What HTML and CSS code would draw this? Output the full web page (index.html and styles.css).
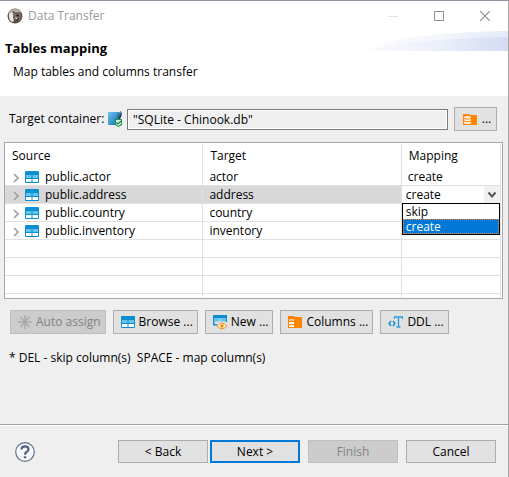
FILE: index.html
```html
<!DOCTYPE html>
<html lang="en">
<head>
<meta charset="utf-8">
<title>Data Transfer</title>
<link rel="stylesheet" href="styles.css">
</head>
<body>
<svg class="defs" width="0" height="0" aria-hidden="true">
  <symbol id="table" viewBox="0 0 14 12">
    <rect width="14" height="12" rx="1" fill="#0a8fd0"/>
    <path d="M1 4h5.500v3H1zM7.500 4H13v3H7.500z" fill="#62c4ef"/>
    <path d="M1 8h5.500v3H1zM7.500 8H13v3H7.500z" fill="#fff"/>
  </symbol>
  <symbol id="chevron" viewBox="0 0 6 10"><path d="M1 1l4 4-4 4" fill="none" stroke="currentColor" stroke-width="1.700"/></symbol>
</svg>
<div class="window">
  <header class="titlebar">
    <svg class="app-icon" viewBox="0 0 16 16" aria-hidden="true">
      <circle cx="8" cy="8" r="7.500" fill="#554b48"/>
      <path d="M1 6Q3 1 8 1q5 0 6.500 4L12 4 9 5 6 3 4 5z" fill="#b8afab"/>
      <path d="M2 6l3-2 2 2-1 3 1 4-2 1Q1 11 2 6z" fill="#e9e4e1"/>
      <path d="M6 6l3-2 4 1 2 3-2 5-4 1-2-3z" fill="#79675f"/>
      <path d="M10 6l2 1-1 2-2-1zM8 11l4-1-1 3H9z" fill="#30282a"/>
      <path d="M8 9l3 1-2 2z" fill="#c9b9b0"/>
    </svg>
    <span class="title">Data Transfer</span>
    <button class="win-btn" aria-label="Minimize" disabled><svg width="10" height="10"><path d="M0 5.500h10" stroke="#e2e2e2"/></svg></button>
    <button class="win-btn" aria-label="Maximize"><svg width="10" height="10"><path d="M.5.5h9v9h-9z" fill="none" stroke="#8c8c8c"/></svg></button>
    <button class="win-btn" aria-label="Close"><svg width="10" height="10"><path d="M0 0l10 10M10 0L0 10" stroke="#8c8c8c" stroke-width="1.200"/></svg></button>
  </header>
  <section class="banner">
    <svg class="swoosh" viewBox="0 0 140 20" preserveAspectRatio="none" aria-hidden="true">
      <defs><linearGradient id="g"><stop offset="0" stop-color="#fafbfe"/><stop offset=".5" stop-color="#ecf0fa"/><stop offset="1" stop-color="#d3dbf4"/></linearGradient></defs>
      <path d="M0 20Q28 2 140 0V20z" fill="url(#g)" opacity=".6"/>
      <path d="M0 20Q40 8 140 6V20z" fill="url(#g)"/>
    </svg>
    <h1>Tables mapping</h1>
    <p>Map tables and columns transfer</p>
  </section>
  <main>
    <div class="target">
      <label for="container">Target container:</label>
      <svg class="db-icon" viewBox="0 0 15 16" aria-hidden="true">
        <defs><linearGradient id="b" x2="1" y2="1"><stop offset="0" stop-color="#72c3ed"/><stop offset="1" stop-color="#0870b5"/></linearGradient></defs>
        <path d="M0 2q0-1 1-1h10v13H1q-1 0-1-1z" fill="url(#b)"/>
        <path d="M8 12Q8 4 13 0q2 3-1 8L9 12z" fill="#174763"/>
        <path d="M9 11Q9 5 13 1" stroke="#8bcaf0" fill="none" stroke-width=".6"/>
        <path d="M7 8h7v6l-3.500 2L7 14z" fill="#1d9655"/>
        <path d="M8 9h5v4l-2.500 2L8 13z" fill="#d4efdf"/>
        <path d="M8.500 11.500l1.500 1.500 3-3" fill="none" stroke="#168646" stroke-width="1.200"/>
      </svg>
      <input id="container" type="text" value='"SQLite - Chinook.db"' readonly>
      <button class="btn choose" aria-label="Choose container"><svg width="14" height="13" viewBox="0 0 14 13" aria-hidden="true"><path d="M0 1h6l1 1h7v10H0z" fill="#ff8500"/><path d="M1 4.500q0-1.500 3.500-1.500T8 4.500v5Q8 11 4.500 11T1 9.500z" fill="#fff2dc"/><path d="M1 5.500q3.500 1.500 7 0M1 8q3.500 1.500 7 0" fill="none" stroke="#ff8500"/></svg>...</button>
    </div>
    <div class="grid">
      <table>
        <colgroup><col class="wide"><col class="wide"><col></colgroup>
        <thead><tr><th>Source</th><th>Target</th><th>Mapping</th></tr></thead>
        <tbody>
          <tr><td><span class="node"><button class="expander" aria-label="Expand actor"><svg width="6" height="10"><use href="#chevron"/></svg></button><svg width="14" height="12"><use href="#table"/></svg>public.actor</span></td><td>actor</td><td>create</td></tr>
          <tr class="selected"><td><span class="node"><button class="expander" aria-label="Expand address"><svg width="6" height="10"><use href="#chevron"/></svg></button><svg width="14" height="12"><use href="#table"/></svg>public.address</span></td><td>address</td>
            <td class="editing"><div class="combo">
              <select aria-label="Mapping for address"><option>skip</option><option selected>create</option></select>
              <svg class="arrow" width="16" height="17" aria-hidden="true"><path d="M4.500 6.500l3.500 4 3.500-4" fill="none" stroke="#555" stroke-width="2"/></svg>
              <ul role="listbox" aria-label="Mapping"><li role="option">skip</li><li role="option" aria-selected="true">create</li></ul>
            </div></td></tr>
          <tr><td><span class="node"><button class="expander" aria-label="Expand country"><svg width="6" height="10"><use href="#chevron"/></svg></button><svg width="14" height="12"><use href="#table"/></svg>public.country</span></td><td>country</td><td></td></tr>
          <tr><td><span class="node"><button class="expander" aria-label="Expand inventory"><svg width="6" height="10"><use href="#chevron"/></svg></button><svg width="14" height="12"><use href="#table"/></svg>public.inventory</span></td><td>inventory</td><td></td></tr>
          <tr><td></td><td></td><td></td></tr>
          <tr><td></td><td></td><td></td></tr>
          <tr><td></td><td></td><td></td></tr>
          <tr class="rest"><td></td><td></td><td></td></tr>
        </tbody>
      </table>
    </div>
    <div class="actions">
      <button class="btn" disabled><svg width="14" height="14" viewBox="0 0 14 14" aria-hidden="true"><path d="M7 0v14M0 7h14M2.500 2l9 10M11.500 2l-9 10" stroke="#aaa" stroke-width="1.500"/></svg>Auto assign</button>
      <button class="btn"><svg width="14" height="12" aria-hidden="true"><use href="#table"/></svg>Browse ...</button>
      <button class="btn"><svg width="14" height="15" viewBox="0 0 14 15" aria-hidden="true"><path d="M0 0h14v7h-1.500V3.500H1.500V9H4v1.500H0z" fill="#0a8fd0"/><path d="M1 3.500h5.500v3H1zM7.500 3.500H13v3H7.500z" fill="#62c4ef"/><path d="M4 11Q9 5 14 11 9 16.500 4 11z" fill="#fff0dc" stroke="#f5902c"/><circle cx="9" cy="11" r="1.700" fill="#ff8500"/></svg>New ...</button>
      <button class="btn"><svg width="14" height="12" viewBox="0 0 14 12" aria-hidden="true"><path d="M0 0h6l1 1h7v11H0z" fill="#ff8500"/><path d="M1 3h5v2H1z" fill="#ffc078"/><path d="M1 6h5v2H1zM1 9h5v2H1z" fill="#fff"/></svg>Columns ...</button>
      <button class="btn"><svg width="15" height="12" viewBox="0 0 15 12" aria-hidden="true"><path d="M3 5L1 7.500 3 10M5 5l2 2.500L5 10" fill="none" stroke="#0a8fd0" stroke-width="1.400"/><path d="M6.500 3V1h8v2M10.500 1v10M8.500 11h4" fill="none" stroke="#2a9bd8" stroke-width="1.300"/></svg>DDL ...</button>
    </div>
    <p class="hint">* DEL - skip column(s)&nbsp; SPACE - map column(s)</p>
  </main>
  <footer>
    <button class="help" aria-label="Help"><svg width="20" height="20" viewBox="0 0 20 20"><circle cx="10" cy="10" r="9.300" fill="#f6f7fa" stroke="#60708d" stroke-width="1.200"/><path d="M6.500 7.500Q6.500 4.300 10 4.300t3.500 2.900Q13.500 9 11.600 10 10 11 10 12.700" fill="none" stroke="#50617f" stroke-width="2.200"/><path d="M8.800 14.300h2.400v2H8.800z" fill="#50617f"/></svg></button>
    <div class="pair"><button class="btn">&lt; Back</button><button class="btn primary">Next &gt;</button></div>
    <button class="btn" disabled>Finish</button>
    <button class="btn">Cancel</button>
  </footer>
</div>
</body>
</html>
```
FILE: styles.css
```css
* { box-sizing: border-box; }
body {
  margin: 0;
  font: 12px/16px "Open Sans", "Noto Sans", sans-serif;
  color: #000;
}
button, input, select { font: inherit; color: inherit; }
h1, p, ul { margin: 0; padding: 0; }
svg { flex: none; }
.defs { position: absolute; }
.window {
  display: flex;
  flex-direction: column;
  min-height: 100vh;
  background: #efefef;
  border-top: 1px solid #9090a0;
  border-right: 1px solid #a5a5a5;
}
.titlebar {
  display: flex;
  align-items: center;
  height: 30px;
  padding-left: 7px;
  background: #fff;
  color: #999;
}
.app-icon { width: 16px; height: 16px; }
.title { flex: 1; padding-left: 5px; }
.win-btn {
  display: flex;
  align-items: center;
  justify-content: center;
  width: 46px;
  height: 28px;
  padding: 0;
  border: 0;
  background: none;
}
.banner {
  position: relative;
  padding: 8px 5px 16px;
  background: #fff;
}
.banner h1 { font-size: 13px; line-height: 18px; font-weight: 700; }
.banner p { padding: 7px 0 0 8px; }
.swoosh { position: absolute; top: 0; right: 0; width: 28%; height: 20px; }
main { padding: 11px 5px 0 4px; }
.target {
  display: flex;
  align-items: center;
  padding: 0 6px 0 5px;
  margin-bottom: 11px;
}
.target label { width: 99px; white-space: nowrap; }
.db-icon { width: 15px; height: 16px; margin-right: 4px; }
.target input {
  flex: 1;
  min-width: 0;
  height: 21px;
  margin-right: 6px;
  padding: 0 5px;
  border: 1px solid #7a7a7a;
  outline: 1px solid #fff;
  outline-offset: -2px;
  background: #efefef;
}
.btn {
  display: flex;
  align-items: center;
  justify-content: center;
  gap: 4px;
  height: 24px;
  padding: 0 4px 0 7px;
  border: 1px solid #adadad;
  border-radius: 0;
  background: #e1e1e1;
  white-space: nowrap;
}
.btn:disabled { background: #ccc; border-color: #bfbfbf; color: #838383; }
.choose { width: 43px; gap: 5px; }
.grid {
  padding: 1px 1px 1px 0;
  border: 1px solid #a5a5ab;
  background: #fff;
}
table { width: 100%; table-layout: fixed; border-collapse: separate; border-spacing: 0; }
.wide { width: 40%; }
th, td {
  height: 18px;
  padding: 0 0 0 6px;
  border-right: 1px solid #e0e0e0;
  border-bottom: 1px solid #e0e0e0;
  font-weight: 400;
  text-align: left;
  white-space: nowrap;
}
th { height: 24px; padding-left: 7px; border-bottom: 0; }
.rest td { height: 3px; border-bottom: 0; }
.selected td { background: #d8d8d8; }
td:first-child { padding-left: 8px; }
.node { display: flex; align-items: center; gap: 6px; }
.expander {
  display: flex;
  padding: 2px 0 0;
  border: 0;
  background: none;
  color: #a0a0a0;
}
td.editing { padding: 0; }
.combo { position: relative; height: 17px; background: #fff; }
.combo select {
  display: block;
  width: 100%;
  height: 17px;
  padding: 0 0 0 4px;
  border: 0;
  appearance: none;
  background: #fff;
}
.arrow { position: absolute; top: 0; right: 0; background: #f0f0f0; pointer-events: none; }
.combo ul {
  position: absolute;
  top: 17px;
  left: 0;
  right: 0;
  z-index: 1;
  border: 1px solid #000;
  background: #fff;
  list-style: none;
}
.combo li { height: 15px; padding-left: 3px; line-height: 15px; }
.combo li[aria-selected] {
  background: #0078d7;
  color: #fff;
  outline: 1px dotted #ff8728;
  outline-offset: -1px;
}
.actions { display: flex; gap: 7px; padding: 11px 6px 0; }
.hint { padding: 16px 5px 0; }
footer {
  display: flex;
  align-items: center;
  gap: 8px;
  margin-top: auto;
  padding: 15px 12px 14px;
  border-top: 1px solid #a0a0a0;
  box-shadow: inset 0 1px #fff;
}
footer .btn { width: 90px; height: 23px; padding: 0; }
.help { display: flex; margin: 0 auto 0 3px; padding: 0; border: 0; background: none; }
.pair { display: flex; gap: 2px; }
.primary { border: 2px solid #0078d7; }
```
